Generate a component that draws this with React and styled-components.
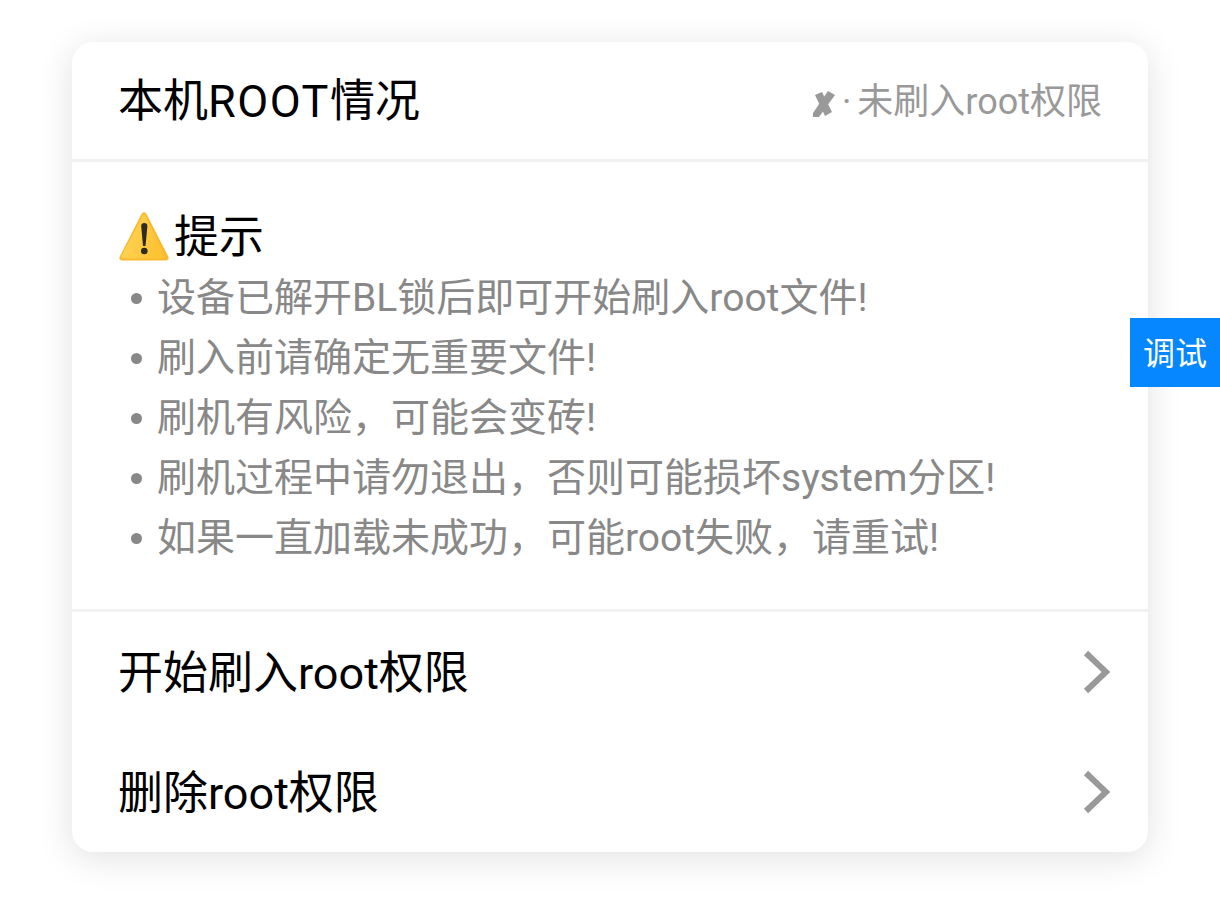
import styled, { createGlobalStyle } from 'styled-components';

const tips = [
  '设备已解开BL锁后即可开始刷入root文件!',
  '刷入前请确定无重要文件!',
  '刷机有风险，可能会变砖!',
  '刷机过程中请勿退出，否则可能损坏system分区!',
  '如果一直加载未成功，可能root失败，请重试!',
];

const actions = ['开始刷入root权限', '删除root权限'];

const WarningIcon = () => (
  <svg width="52" height="50" viewBox="0 0 52 50">
    <defs>
      <linearGradient id="warnFill" x1="0" y1="0" x2="1" y2="0.3">
        <stop offset="0" stopColor="#ffd65c" />
        <stop offset="1" stopColor="#fdc233" />
      </linearGradient>
    </defs>
    <path d="M26 1 Q27.5 1 29 4 L50 45 Q52 49 48 49.5 L4 49.5 Q0 49 2 45 L23 4 Q24.5 1 26 1 Z" fill="#f8b92e" />
    <path d="M26 2 L47 45 Q48 47.500 46 47.500 L5 47.500 Q2.500 47.500 3.500 45 Z" fill="url(#warnFill)" />
    <path d="M23.200 15 Q23.200 12 26.300 12 Q29.400 12 29.400 15 L27.500 35 L25 35 Z" fill="#2e2a20" />
    <circle cx="26.300" cy="40" r="3.300" fill="#2e2a20" />
  </svg>
);

const CrossIcon = () => (
  <svg width="24" height="28" viewBox="0 0 24 28">
    <path d="M1 23 L16 1 L23 5 L7 27 L1 27 Z M3 5 L10 2 L20 22 L13 26 Z" fill="#999" />
  </svg>
);

const Chevron = () => (
  <svg width="28" height="44" viewBox="0 0 28 44">
    <path d="M4 3 L24 22 L4 41" fill="none" stroke="#999" strokeWidth="6" />
  </svg>
);

export default function App() {
  return (
    <>
      <GlobalStyle />
      <Page>
        <Card>
          <Header>
            <Title>
              本机<Wide>ROOT</Wide>情况
            </Title>
            <Status>
              <CrossIcon />
              <Dot>·</Dot>
              <StatusText>未刷入root权限</StatusText>
            </Status>
          </Header>
          <Notice>
            <NoticeTitle>
              <WarningIcon />
              <span>提示</span>
            </NoticeTitle>
            <TipList>
              {tips.map(tip => (
                <li key={tip}>{tip}</li>
              ))}
            </TipList>
          </Notice>
          <div>
            {actions.map(action => (
              <ActionRow key={action}>
                <span>{action}</span>
                <Chevron />
              </ActionRow>
            ))}
          </div>
        </Card>
      </Page>
      <DebugButton>调试</DebugButton>
    </>
  );
}

const GlobalStyle = createGlobalStyle`
  html, body {
    margin: 0;
    background: #fff;
  }
  body {
    font-family: Roboto, "Noto Sans CJK SC", sans-serif;
  }
`;

const Page = styled.div`
  padding: 42px 72px 50px;
`;

const Card = styled.div`
  background: #fff;
  border-radius: 21px;
  box-shadow: 0 6px 36px rgba(0, 0, 0, 0.12);
  overflow: hidden;
`;

const Header = styled.div`
  display: flex;
  align-items: center;
  justify-content: space-between;
  height: 117px;
  padding: 0 46px;
  border-bottom: 3px solid #f2f2f2;
`;

const Title = styled.div`
  font-size: 45px;
  color: #000;
  padding-bottom: 6px;
`;

const Wide = styled.span`
  letter-spacing: 1.5px;
`;

const Status = styled.div`
  display: flex;
  align-items: center;
  gap: 6px;
  font-size: 36px;
  color: #999;
  svg {
    margin-top: 6px;
  }
`;

const Dot = styled.span`
  margin-top: 2px;
`;

const StatusText = styled.span`
  margin-bottom: 6px;
`;

const Notice = styled.div`
  height: 450px;
  box-sizing: border-box;
  padding: 46px 46px 0;
  border-bottom: 3px solid #f2f2f2;
`;

const NoticeTitle = styled.div`
  display: flex;
  align-items: center;
  gap: 4px;
  height: 56px;
  font-size: 45px;
  color: #000;
  span {
    margin-bottom: 6px;
  }
`;

const TipList = styled.ul`
  list-style: none;
  margin: 4px 0 0;
  padding: 0 0 0 39px;
  li {
    position: relative;
    height: 60px;
    line-height: 60px;
    font-size: 39px;
    color: #888;
  }
  li::before {
    content: '';
    position: absolute;
    left: -26px;
    top: 25px;
    width: 11px;
    height: 11px;
    border-radius: 50%;
    background: #888;
  }
`;

const ActionRow = styled.div`
  display: flex;
  align-items: center;
  justify-content: space-between;
  height: 120px;
  padding: 0 38px 0 46px;
  font-size: 45px;
  color: #000;
  span {
    margin-bottom: 6px;
  }
`;

const DebugButton = styled.div`
  position: fixed;
  right: 0;
  top: 318px;
  width: 90px;
  height: 69px;
  box-sizing: border-box;
  padding-bottom: 4px;
  display: flex;
  align-items: center;
  justify-content: center;
  background: #0687ff;
  color: #fff;
  font-size: 32px;
`;
